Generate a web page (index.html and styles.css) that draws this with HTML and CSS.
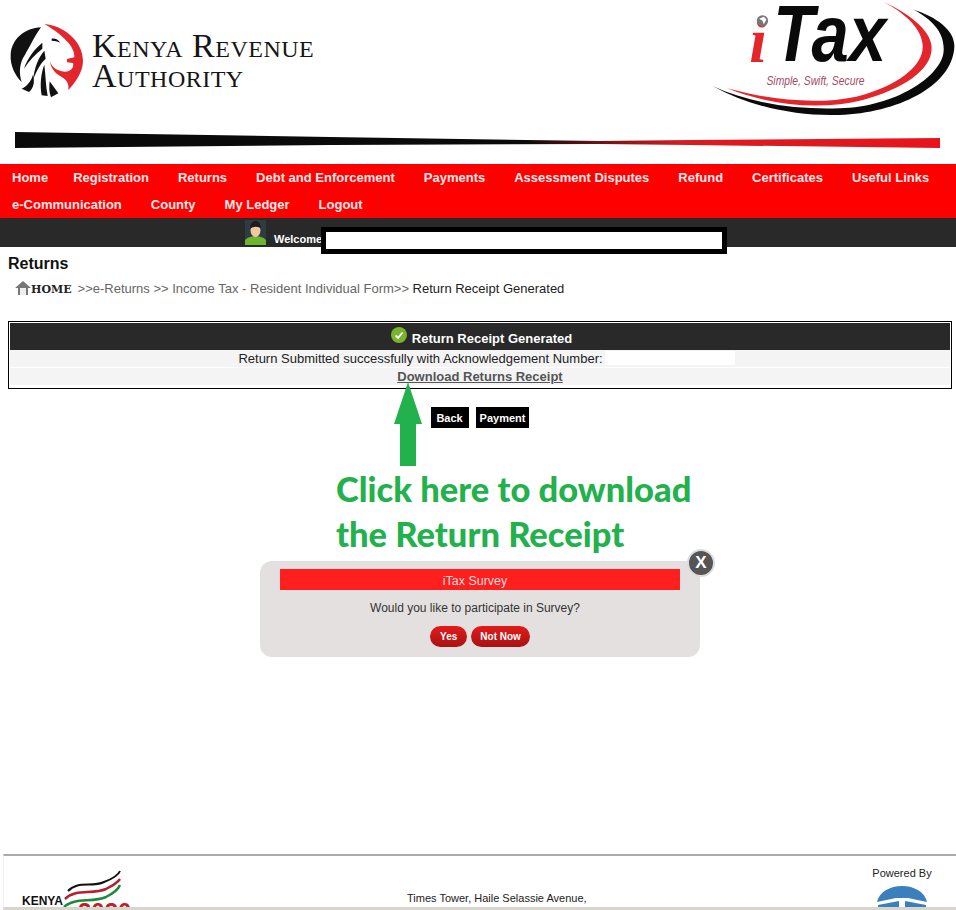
FILE: index.html
```html
<!DOCTYPE html>
<html lang="en">

<head>
    <title>iTax - Return Receipt Generated</title>
    <link rel="stylesheet" href="styles.css">
</head>

<body>
    <div id="header">
        <div class="logos">
            <div class="kra">
                <svg class="lion" viewBox="0 0 255 255" width="85" height="85">
                    <path fill="#111" d="M108 28C60 30 20 62 17 110C15 142 30 172 50 192C40 160 45 132 60 110C75 85 90 52 108 28Z"/>
                    <path fill="#111" d="M112 74C92 90 68 118 57 152C72 128 92 108 112 92Z"/>
                    <path fill="#111" d="M118 98C100 118 88 150 84 186C94 160 106 136 122 122Z"/>
                    <path fill="#111" d="M84 170C78 190 66 204 50 212L72 222C86 210 90 192 84 170Z"/>
                    <path fill="#111" d="M118 140C108 165 104 200 110 232L128 234C122 205 122 170 118 140Z"/>
                    <path fill="#111" d="M134 190C132 208 132 224 138 238L160 226Z"/>
                    <path fill="#e2262b" d="M118 18C175 22 235 70 234 130C233 165 210 195 190 216C192 200 188 190 175 180C155 170 138 155 135 130C140 145 150 155 170 160C195 165 208 150 204 135L186 133L186 123L208 118C210 95 190 60 118 18Z"/>
                    <path fill="#111" d="M140 62C150 60 160 65 166 74C158 70 150 68 140 68Z"/>
                </svg>
                <div class="kra-name">
                    <div class="kra-top">Kenya Revenue</div>
                    <div class="kra-bottom">Authority</div>
                </div>
            </div>
            <svg class="itax" viewBox="0 0 800 480" width="266" height="160">
                <path fill="#e2262b" d="M112 265C250 320 400 330 520 300C650 265 740 200 725 130C715 80 640 30 580 5C650 40 700 90 700 140C700 200 620 260 500 290C380 315 240 300 112 265Z"/>
                <path fill="#0a0a0a" d="M68 258C180 320 320 350 450 345C620 340 790 260 795 140C797 90 740 50 672 28C730 60 770 100 762 160C750 230 620 320 450 325C320 330 180 310 68 258Z"/>
                <text class="itax-i" x="178" y="185">i</text>
                <circle cx="218" cy="62" r="17" fill="#777"/>
                <path fill="#fff" d="M208 56l14-6l8 8l-8 14l-4-10z"/>
                <text class="itax-tax" x="250" y="183" textLength="340" lengthAdjust="spacingAndGlyphs">Tax</text>
                <text class="itax-slogan" x="230" y="256" textLength="295" lengthAdjust="spacingAndGlyphs">Simple, Swift, Secure</text>
            </svg>
        </div>
        <svg class="swoosh" viewBox="0 0 956 20" width="956" height="20">
            <defs>
                <linearGradient id="sw" x1="15" y1="0" x2="940" y2="0" gradientUnits="userSpaceOnUse">
                    <stop offset="0.55" stop-color="#0a0a0a"/>
                    <stop offset="0.72" stop-color="#d81c20"/>
                    <stop offset="1" stop-color="#e8141c"/>
                </linearGradient>
            </defs>
            <path fill="url(#sw)" d="M15 2L330 7L600 11L690 10L940 8V18L690 15L600 14L330 15L15 18Z"/>
        </svg>
    </div>

    <ul id="menu">
        <li>Home</li>
        <li>Registration</li>
        <li>Returns</li>
        <li>Debt and Enforcement</li>
        <li>Payments</li>
        <li>Assessment Disputes</li>
        <li>Refund</li>
        <li>Certificates</li>
        <li>Useful Links</li>
        <li>e-Communication</li>
        <li>County</li>
        <li>My Ledger</li>
        <li>Logout</li>
    </ul>

    <div id="userbar">
        <svg class="avatar" viewBox="0 0 21 25" width="21" height="25">
            <rect width="21" height="25" fill="#2f3b42"/>
            <path fill="#6cb52d" d="M0 25V20C3 17 7 16 10.500 16C14 16 18 17 21 20V25Z"/>
            <ellipse cx="10.500" cy="10" rx="5" ry="7" fill="#f0c8a0"/>
            <path fill="#1c1c1c" d="M5 9C5 3 8 1 10.500 1C13 1 16 3 16 9C14 6 8 6 5 9Z"/>
        </svg>
        <span class="welcome">Welcome</span>
        <div class="redacted"></div>
    </div>

    <div id="content">
        <h1>Returns</h1>
        <div class="trail">
            <span class="home">
                <svg viewBox="0 0 16 16" width="16" height="16">
                    <path fill="#777" d="M8 1L0 8H3V15H13V8H16Z"/>
                    <rect x="5" y="8" width="6" height="7" fill="#eee"/>
                </svg>HOME</span>
            <span class="crumbs">&gt;&gt;e-Returns &gt;&gt; Income Tax - Resident Individual Form&gt;&gt; <b>Return Receipt Generated</b></span>
        </div>

        <div class="panel">
            <div class="panel-head">
                <svg viewBox="0 0 16 16" width="16" height="16">
                    <circle cx="8" cy="8" r="8" fill="#7ab32e"/>
                    <path d="M4.500 8.500L7 11L11.500 5.500" fill="none" stroke="#fff" stroke-width="1.800"/>
                </svg>
                <span>Return Receipt Generated</span>
            </div>
            <div class="panel-row">Return Submitted successfully with Acknowledgement Number:<span class="blank"></span></div>
            <div class="panel-row"><a href="#">Download Returns Receipt</a></div>
        </div>

        <div class="actions">
            <button>Back</button>
            <button>Payment</button>
        </div>
    </div>

    <div id="note">
        <svg viewBox="0 0 28 84" width="28" height="84">
            <path fill="#22b14c" d="M14 0L28 42H22V84H6V42H0Z"/>
        </svg>
        <p>Click here to download<br>the Return Receipt</p>
    </div>

    <div id="survey">
        <div class="close">X</div>
        <div class="survey-title">iTax Survey</div>
        <p>Would you like to participate in Survey?</p>
        <div class="survey-btns">
            <button>Yes</button>
            <button>Not Now</button>
        </div>
    </div>

    <div id="footer">
        <svg class="vision" viewBox="0 0 120 48" width="120" height="48">
            <text class="vision-kenya" x="0" y="35">KENYA</text>
            <path fill="none" stroke="#111" stroke-width="2" d="M46 21C56 10 70 18 82 12C90 9 96 6 98 1"/>
            <path fill="none" stroke="#b5202a" stroke-width="2.500" d="M43 29C54 18 70 25 84 19C92 15 96 12 98 9"/>
            <path fill="none" stroke="#1e8a3c" stroke-width="2.500" d="M42 37C52 27 70 33 84 27C90 24 96 20 98 15"/>
            <text class="vision-year" x="56" y="50">2030</text>
        </svg>
        <div class="address">Times Tower, Haile Selassie Avenue,</div>
        <div class="powered">
            <span>Powered By</span>
            <svg viewBox="0 0 50 30" width="50" height="30">
                <path fill="#3b7fbd" d="M0 16C2 6 13 0 25 0C37 0 48 6 50 16L31 12H19Z"/>
                <path fill="#3b7fbd" d="M1 19L22 15V30H2Z"/>
                <path fill="#3b7fbd" d="M49 19L28 15V30H48Z"/>
            </svg>
        </div>
    </div>
</body>

</html>
```

FILE: styles.css
```css
* {
    box-sizing: border-box;
}

body {
    position: relative;
    display: flex;
    flex-direction: column;
    height: 910px;
    margin: 0;
    overflow: hidden;
    background-color: #fff;
    color: #222;
    font-family: "Liberation Sans", Arial, sans-serif;
}

#header {
    height: 164px;
}

.logos {
    display: flex;
    justify-content: space-between;
    height: 130px;
}

.kra {
    display: flex;
    align-items: flex-start;
    padding: 18px 0 0 5px;
}

.kra-name {
    margin: 13px 0 0 2px;
    font-family: "Liberation Serif", serif;
    color: #151515;
    font-variant: small-caps;
}

.kra-top {
    font-size: 34px;
    line-height: 30px;
    letter-spacing: 0.5px;
}

.kra-bottom {
    font-size: 34px;
    line-height: 29px;
    letter-spacing: 0.5px;
}

.itax-i {
    font-family: "Liberation Serif", serif;
    font-size: 190px;
    font-weight: bold;
    font-style: italic;
    fill: #e2262b;
}

.itax-tax {
    font-family: "Liberation Sans", sans-serif;
    font-size: 240px;
    font-weight: bold;
    font-style: italic;
    fill: #0a0a0a;
}

.itax-slogan {
    font-family: "Liberation Sans", sans-serif;
    font-size: 36px;
    font-style: italic;
    fill: #a34a5e;
}

.swoosh {
    display: block;
}

#menu {
    display: flex;
    flex-wrap: wrap;
    height: 54px;
    margin: 0;
    padding: 0;
    list-style: none;
    background-color: #f00;
}

#menu li {
    height: 27px;
    padding: 0 15px 0 13px;
    border-right: 1px solid #d81010;
    color: #fdeaea;
    font-size: 13px;
    font-weight: bold;
    line-height: 27px;
}

#menu li:first-child {
    padding: 0 11px 0 12px;
}

#menu li:nth-child(10) {
    padding-left: 12px;
}

#userbar {
    position: relative;
    display: flex;
    align-items: flex-end;
    height: 29px;
    padding: 0 0 2px 245px;
    background-color: #292929;
}

.welcome {
    margin-left: 8px;
    color: #fff;
    font-size: 11px;
    font-weight: bold;
}

.redacted {
    position: absolute;
    top: 9px;
    left: 321px;
    width: 406px;
    height: 27px;
    border: 5px solid #000;
    background-color: #fff;
}

#content {
    padding: 8px 4px 0 8px;
}

h1 {
    margin: 0;
    color: #111;
    font-size: 16px;
    line-height: 18px;
}

.trail {
    display: flex;
    align-items: center;
    height: 24px;
    margin-top: 3px;
    padding-left: 7px;
}

.home {
    display: flex;
    align-items: flex-end;
    color: #222;
    font-family: "DejaVu Serif", serif;
    font-size: 11px;
    font-weight: bold;
}

.crumbs {
    margin-left: 6px;
    color: #666;
    font-size: 13px;
}

.crumbs b {
    color: #222;
    font-weight: normal;
}

.panel {
    margin-top: 21px;
    padding: 1px 1px 2px;
    border: 1px solid #000;
}

.panel-head {
    display: flex;
    justify-content: center;
    align-items: center;
    height: 27px;
    padding-left: 3px;
    background-color: #292929;
    color: #fff;
    font-size: 13px;
    font-weight: bold;
}

.panel-head svg {
    margin: 0 5px 4px 0;
}

.panel-head span {
    margin-top: 3px;
}

.panel-row {
    height: 18px;
    border-bottom: 1px solid #fff;
    background-color: #f4f4f4;
    font-size: 13px;
    line-height: 18px;
    text-align: center;
}

.blank {
    display: inline-block;
    width: 130px;
    height: 14px;
    margin: 0 -13px 0 2px;
    background-color: #fff;
    vertical-align: -2px;
}

.panel-row a {
    color: #555;
    font-weight: bold;
}

.actions {
    display: flex;
    justify-content: center;
    gap: 7px;
    margin-top: 18px;
}

.actions button {
    min-width: 38px;
    height: 21px;
    padding: 0 4px;
    border: 0;
    background-color: #000;
    color: #fff;
    font-family: "Liberation Sans", sans-serif;
    font-size: 11px;
    font-weight: bold;
}

#note {
    position: absolute;
    top: 382px;
    left: 336px;
}

#note svg {
    display: block;
    margin-left: 58px;
}

#note p {
    margin: 0;
    color: #22b14c;
    font-family: Lato, sans-serif;
    font-size: 34.500px;
    font-weight: 900;
    line-height: 45px;
}

#survey {
    position: absolute;
    top: 561px;
    left: 260px;
    width: 440px;
    height: 96px;
    padding-top: 8px;
    border-radius: 12px;
    background-color: #e4e0e0;
    text-align: center;
}

.close {
    position: absolute;
    top: -12px;
    right: -15px;
    width: 28px;
    height: 28px;
    border: 2px solid #ddd;
    border-radius: 50%;
    background-color: #555;
    color: #fff;
    font-size: 17px;
    font-weight: bold;
    line-height: 24px;
}

.survey-title {
    height: 21px;
    margin: 0 20px;
    padding-right: 10px;
    background-color: #ff1f1f;
    color: #f7dede;
    font-size: 12.500px;
    line-height: 24px;
}

#survey p {
    margin: 11px 0 11px;
    padding-right: 10px;
    color: #333;
    font-size: 12px;
    line-height: 14px;
}

.survey-btns {
    display: flex;
    justify-content: center;
    gap: 4px;
}

.survey-btns button {
    height: 21px;
    padding: 0 9px;
    border: 0;
    border-radius: 11px;
    background: linear-gradient(#e31b1b, #a81212);
    color: #fff;
    font-family: "Liberation Sans", sans-serif;
    font-size: 10px;
    font-weight: bold;
}

.survey-btns button:first-child {
    padding: 0 10px;
}

#footer {
    display: flex;
    height: 56px;
    margin: auto 0 0 3px;
    border-top: 2px solid #aaa;
    border-bottom: 3px solid #d8d5cc;
    border-left: 1px solid #eee;
    overflow: hidden;
}

.vision {
    flex: none;
    margin: 14px 0 0 18px;
    overflow: visible;
}

.vision-kenya {
    font-family: "Liberation Sans", sans-serif;
    font-size: 12px;
    font-weight: bold;
    fill: #111;
}

.vision-year {
    font-family: "Liberation Sans", sans-serif;
    font-size: 24px;
    font-weight: bold;
    fill: #c0202a;
}

.address {
    margin: 36px 0 0 265px;
    font-size: 11px;
}

.powered {
    display: flex;
    flex-direction: column;
    align-items: center;
    width: 60px;
    margin: 11px 24px 0 auto;
    font-size: 11px;
}

.powered span {
    margin-bottom: 7px;
    white-space: nowrap;
}

.powered svg {
    flex: none;
}
```
